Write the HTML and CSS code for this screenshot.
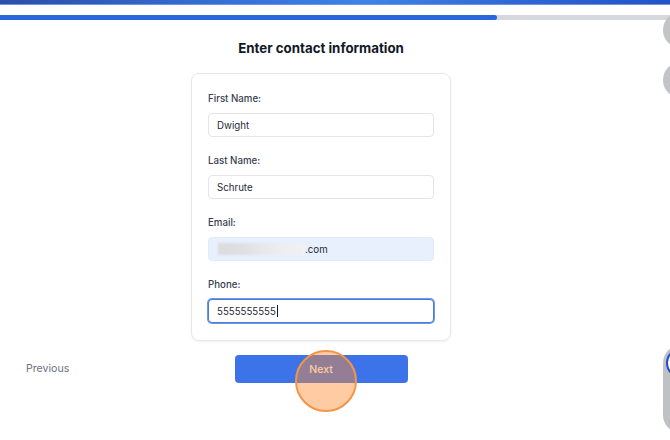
FILE: index.html
```html
<!DOCTYPE html>
<html lang="en">
<head>
<meta charset="utf-8">
<title>Enter contact information</title>
<link rel="stylesheet" href="styles.css">
</head>
<body>
  <div class="topbar"></div>
  <div class="progress"><div class="progress-fill"></div></div>

  <main class="main">
    <h1 class="title">Enter contact information</h1>
    <form class="card">
      <div class="field">
        <label class="label">First Name:</label>
        <div class="input">Dwight</div>
      </div>
      <div class="field">
        <label class="label">Last Name:</label>
        <div class="input">Schrute</div>
      </div>
      <div class="field">
        <label class="label">Email:</label>
        <div class="input input-autofill"><span class="redacted"></span>.com</div>
      </div>
      <div class="field">
        <label class="label">Phone:</label>
        <div class="input input-focus">5555555555<span class="caret"></span></div>
      </div>
    </form>
    <div class="footer">
      <div class="prev-cell"><span class="prev">Previous</span></div>
      <button class="next" type="button">Next</button>
      <div></div>
    </div>
  </main>

  <div class="click-marker"></div>

  <div class="side-bubble bubble-1"></div>
  <div class="side-bubble bubble-2"></div>
  <div class="side-pill"><div class="pill-ring"></div></div>
</body>
</html>
```

FILE: styles.css
```css
* { box-sizing: border-box; }

html, body {
  margin: 0;
  padding: 0;
  background: #ffffff;
  width: 670px;
  height: 440px;
  overflow: hidden;
  font-family: Inter, "Noto Sans", "Liberation Sans", sans-serif;
  color: #111827;
}

body { position: relative; }

.topbar {
  height: 5px;
  background: linear-gradient(90deg, #2b4ea9 0%, #3572d8 35%, #3d83e6 55%, #2f63d2 80%, #2452c8 100%);
  border-bottom: 1px solid #6d95de;
}

.progress {
  margin-top: 10px;
  height: 5px;
  background: #d5d8dd;
}

.progress-fill {
  width: 497px;
  height: 100%;
  background: #2a66e0;
  border-radius: 0 3px 3px 0;
}

.main {
  width: 642px;
  display: flex;
  flex-direction: column;
  align-items: center;
}

.title {
  margin: 18px 0 0;
  font-size: 13.3px;
  line-height: 20px;
  font-weight: 700;
  color: #111827;
}

.card {
  margin-top: 15px;
  width: 260px;
  border: 1px solid #e5e7eb;
  border-radius: 8px;
  box-shadow: 0 1px 3px rgba(0, 0, 0, 0.06);
  padding: 18px 16px 17px;
  display: flex;
  flex-direction: column;
  gap: 17px;
}

.field {
  display: flex;
  flex-direction: column;
  gap: 7px;
}

.label {
  font-size: 9.7px;
  line-height: 14px;
  font-weight: 500;
  color: #374151;
}

.input {
  height: 24px;
  border: 1px solid #e3e5e9;
  border-radius: 4px;
  padding: 0 8px;
  display: flex;
  align-items: center;
  font-size: 9.7px;
  color: #1f2937;
  background: #ffffff;
}

.input-autofill {
  background: #e8f0fe;
  border-color: #e3ebfb;
}

.redacted {
  display: inline-block;
  width: 87px;
  height: 12px;
  margin-left: 1px;
  background: linear-gradient(90deg, #dcdcde 0%, #e0e0e2 30%, #e9e9eb 55%, #eeeef0 75%, #f1f1f3 100%);
  filter: blur(1px);
}

.input-focus {
  border: 1px solid #4a7bdc;
  box-shadow: 0 0 0 1px #6f97e6;
}

.caret {
  display: inline-block;
  width: 1px;
  height: 12px;
  background: #111827;
  margin-left: 1px;
}

.footer {
  margin-top: 14px;
  width: 100%;
  display: grid;
  grid-template-columns: 1fr 173px 1fr;
  align-items: center;
}

.prev-cell {
  padding-left: 26px;
  display: flex;
  align-items: center;
  height: 28px;
}

.prev {
  font-size: 10.6px;
  line-height: 14px;
  color: #6b7280;
}

.next {
  height: 28px;
  border: none;
  border-radius: 4px;
  background: #3c73e8;
  color: #ffffff;
  font-family: inherit;
  font-size: 10.5px;
  font-weight: 500;
}

.click-marker {
  position: absolute;
  left: 295px;
  top: 350px;
  width: 62px;
  height: 62px;
  border-radius: 50%;
  border: 2px solid #f39548;
  background: rgba(255, 140, 50, 0.45);
}

.side-bubble {
  position: absolute;
  left: 663px;
  width: 36px;
  height: 36px;
  border-radius: 50%;
  background: #c3c4c8;
}

.bubble-1 { top: 12px; }
.bubble-2 { top: 62px; }

.side-pill {
  position: absolute;
  left: 663px;
  top: 345px;
  width: 36px;
  height: 88px;
  border-radius: 18px;
  background: #c0c1c5;
  padding: 3px;
}

.pill-ring {
  width: 30px;
  height: 30px;
  border-radius: 50%;
  border: 2px solid #1f4fd0;
  background: #ffffff;
}
```
